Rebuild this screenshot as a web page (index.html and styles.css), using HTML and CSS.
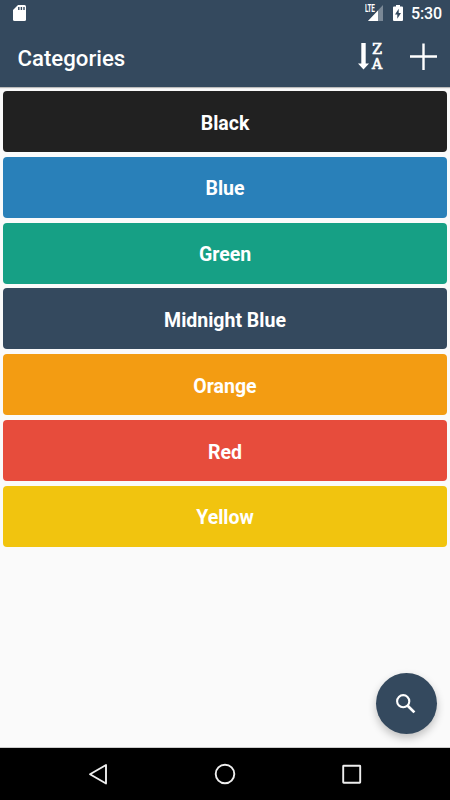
FILE: index.html
```html
<!DOCTYPE html>
<html lang="en">
<head>
<meta charset="utf-8">
<title>Categories</title>
<link rel="stylesheet" href="styles.css">
</head>
<body>
<div class="screen">
  <header class="top">
    <div class="status">
      <svg class="sd" width="13" height="16" viewBox="0 0 13 16"><path fill="#fff" d="M5 0h6.500Q13 0 13 1.500v13q0 1.500-1.500 1.500h-10Q0 16 0 14.500V5z"/><path stroke="#34495e" stroke-width="1.400" d="M5.800 2v3M8.400 2v3M11 2v3"/></svg>
      <div class="indicators">
        <div class="signal">
          <svg width="17" height="16" viewBox="0 0 17 16"><path fill="#fff" opacity=".35" d="M16 0v16H1z"/><path fill="#fff" d="M11 5.500V16H1z"/></svg>
          <span class="lte">LTE</span>
        </div>
        <svg class="battery" width="10" height="16" viewBox="0 0 10 16"><path fill="#fff" d="M3 0h4v1.500h2q1 0 1 1V15q0 1-1 1H1q-1 0-1-1V2.500q0-1 1-1h2z"/><path fill="#34495e" d="M5.700 3.800 2 9.500h2.300v4.200L8 8H5.700z"/></svg>
        <span class="clock">5:30</span>
      </div>
    </div>
    <div class="bar">
      <h1 class="title">Categories</h1>
      <div class="actions">
        <div class="sort">
          <svg width="11" height="28" viewBox="0 0 11 28"><path fill="#fff" d="M3.300 0h4.400v20.500H11L5.500 26.500 0 20.500h3.300z"/></svg>
          <div class="letters"><span>Z</span><span>A</span></div>
        </div>
        <svg class="plus" width="28" height="28" viewBox="0 0 28 28"><path stroke="#fff" stroke-width="2.400" d="M14.500 .5v26.500M1 13.500h27"/></svg>
      </div>
    </div>
  </header>
  <main class="list">
    <div class="card black">Black</div>
    <div class="card blue">Blue</div>
    <div class="card green">Green</div>
    <div class="card midnight">Midnight Blue</div>
    <div class="card orange">Orange</div>
    <div class="card red">Red</div>
    <div class="card yellow">Yellow</div>
  </main>
  <button class="fab" aria-label="Search">
    <svg width="20" height="20" viewBox="0 0 20 20" fill="none" stroke="#fff"><circle cx="7.200" cy="7.200" r="6.100" stroke-width="2.100"/><path stroke-width="2.700" d="m11.700 11.700 6.700 6.700"/></svg>
  </button>
  <nav class="nav">
    <svg width="310" height="52" viewBox="0 0 310 52" fill="none" stroke="#eee" stroke-width="1.900" stroke-linejoin="round"><path d="M36 17v18.500L20 26.200z"/><circle cx="155" cy="26" r="9.300"/><rect x="273.200" y="17.700" width="17" height="17" rx=".5"/></svg>
  </nav>
</div>
</body>
</html>
```
FILE: styles.css
```css
* { box-sizing: border-box; }
body { margin: 0; font-family: Roboto, sans-serif; color: #fff; }
.screen {
  position: relative;
  display: flex;
  flex-direction: column;
  width: 450px;
  height: 800px;
  overflow: hidden;
  background: #fafafa;
}
.top { height: 87px; background: #34495e; box-shadow: 0 1px 1px rgba(0,0,0,.25); }
.status {
  display: flex;
  justify-content: space-between;
  height: 27px;
  padding: 5px 9px 0 13px;
}
.indicators { display: flex; }
.signal { position: relative; width: 17px; height: 16px; margin-right: 9px; }
.signal svg { display: block; }
.lte {
  position: absolute;
  left: -2px;
  top: 0;
  padding-right: 1px;
  background: #34495e;
  font: 700 10px/8px Roboto, sans-serif;
  letter-spacing: -.3px;
  transform: scaleX(.64);
  transform-origin: left;
}
.clock { width: 30px; margin-left: 8px; font-size: 16px; font-weight: 500; line-height: 18px; letter-spacing: -.1px; }
.bar {
  display: flex;
  justify-content: space-between;
  align-items: center;
  height: 60px;
  padding: 0 13px 0 17.500px;
}
.title { margin: 1px 0 0; font-size: 22.200px; font-weight: 500; line-height: 30px; }
.actions { display: flex; align-items: center; gap: 26px; }
.sort { display: flex; gap: 2px; padding-top: 1px; }
.letters {
  display: flex;
  flex-direction: column;
  align-items: center;
  width: 12px;
  margin-top: -1px;
  font: 14px/15px "DejaVu Serif", serif;
  -webkit-text-stroke: .7px #fff;
}
.letters span { height: 15px; }
.list { flex: 1; display: flex; flex-direction: column; gap: 4.830px; padding: 4px 3.400px 0; }
.card {
  display: flex;
  align-items: center;
  justify-content: center;
  height: 61px;
  flex: none;
  border-radius: 4px;
  font-size: 19.500px;
  font-weight: 700;
  padding-top: 3px;
}
.black { background: #212121; }
.blue { background: #2980b9; }
.green { background: #16a085; }
.midnight { background: #34495e; }
.orange { background: #f39c12; }
.red { background: #e74c3c; }
.yellow { background: #f1c40f; }
.fab {
  position: absolute;
  left: 375.500px;
  top: 673px;
  display: flex;
  align-items: center;
  justify-content: center;
  width: 61px;
  height: 61px;
  padding: 0;
  border: 0;
  border-radius: 50%;
  background: #34495e;
  box-shadow: 0 4px 8px rgba(0,0,0,.24);
}
.nav { display: flex; justify-content: center; height: 52px; background: #000; box-shadow: 0 -1px 0 #ccc; }
```
